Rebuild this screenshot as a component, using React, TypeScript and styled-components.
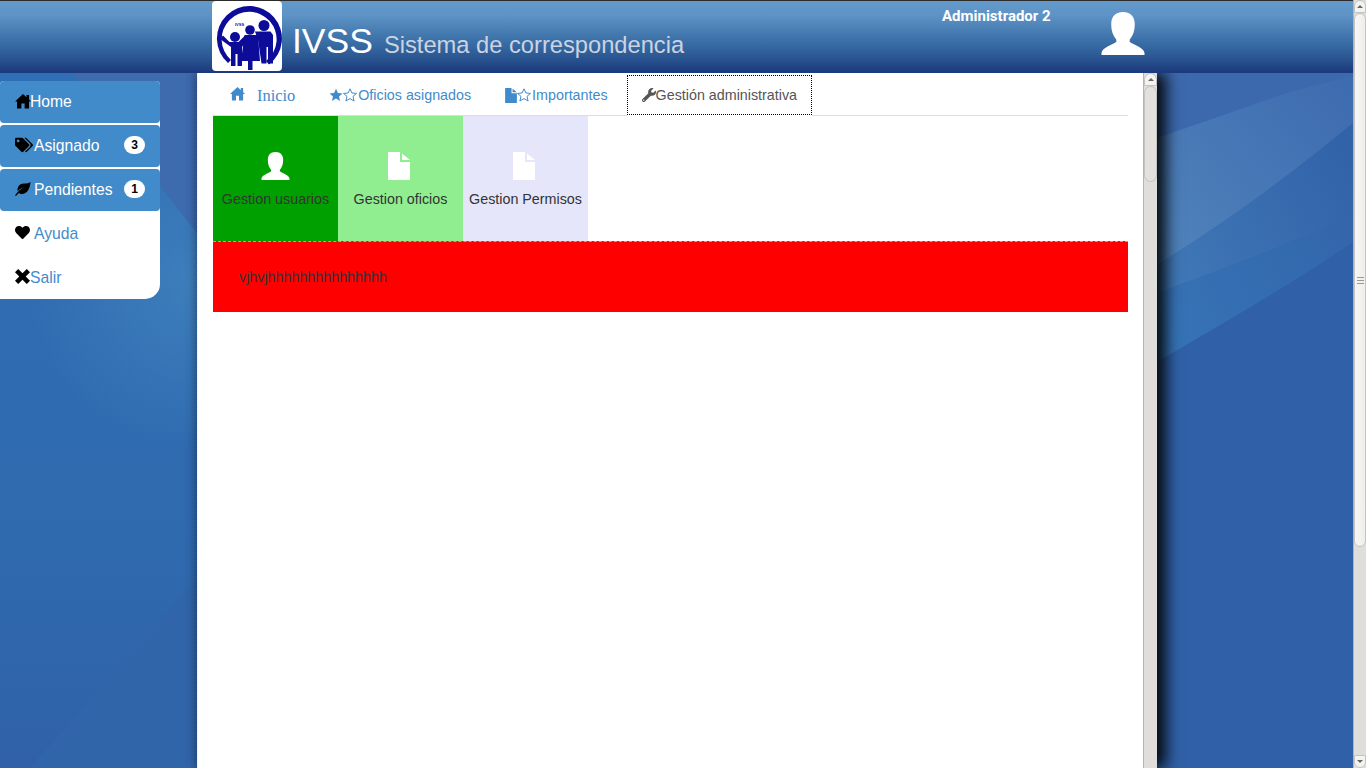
import { ReactNode } from "react";
import styled, { createGlobalStyle } from "styled-components";
import { FaTags, FaHeart, FaWrench } from "react-icons/fa";

const Global = createGlobalStyle`
    html, body { margin: 0; padding: 0; height: 100%; overflow: hidden; }
    body { font-family: "Liberation Sans", Arial, sans-serif; font-size: 14.3px; color: #333; }
    * { box-sizing: border-box; }
`;

const Page = styled.div`
    display: flex;
    width: 100%;
    height: 768px;
    overflow: hidden;
`;

const Viewport = styled.div`
    position: relative;
    flex: 1;
    display: flex;
    flex-direction: column;
    background: #3061a8;
    overflow: hidden;
`;

const Wallpaper = styled.svg`
    position: absolute;
    left: 0;
    top: 0;
    width: 1353px;
    height: 768px;
`;

const Header = styled.header`
    position: relative;
    z-index: 1;
    height: 73px;
    flex: none;
    display: flex;
    padding-left: 212px;
    background: linear-gradient(to bottom, #6499cb 0%, #5e93c6 20%, #3c71a9 55%, #2a5691 80%, #1c3a7c 100%);
    border-top: 1px solid #2b2b2b;
    border-bottom: 1px solid #1b3a80;
`;

const LogoBox = styled.div`
    width: 70px;
    height: 70px;
    background: #fff;
    border-radius: 4px;
`;

const Brand = styled.h1`
    margin: 19px 0 0 10px;
    width: 392px;
    font-weight: 400;
    font-size: 35.5px;
    line-height: 42px;
    color: #fff;
    white-space: nowrap;
`;

const BrandSub = styled.small`
    font-size: 23.7px;
    margin-left: 11px;
    color: #ccd3e0;
`;

const UserName = styled.div`
    margin: 6px 0 0 258px;
    width: 159px;
    font-family: Roboto, sans-serif;
    font-weight: 700;
    font-size: 15px;
    line-height: 18px;
    color: #fff;
`;

const Avatar = styled.svg`
    margin-top: 11px;
    width: 44px;
    height: 43px;
    fill: #fff;
`;

const Body = styled.div`
    position: relative;
    flex: 1;
    display: flex;
    align-items: flex-start;
    min-height: 0;
`;

const Sidebar = styled.ul`
    list-style: none;
    margin: 8px 0 0;
    padding: 0;
    width: 160px;
    background: #fff;
    border-radius: 4px 4px 15px 0;
`;

const NavItem = styled.li<{ $active?: boolean }>`
    display: flex;
    align-items: center;
    height: 42px;
    padding: 0 15px;
    border-radius: 4px;
    font-size: 15.7px;
    line-height: 40px;
    color: ${(props) => (props.$active ? "#fff" : "#428bca")};
    background: ${(props) => (props.$active ? "#428bca" : "transparent")};
    & + & { margin-top: 2px; }
`;

const NavIcon = styled.span<{ $width: number }>`
    display: inline-flex;
    align-items: center;
    width: ${(props) => props.$width}px;
    margin-top: -3px;
    color: #000;
    flex: none;
    svg { overflow: visible; }
`;

const Badge = styled.span`
    margin-left: auto;
    width: 21px;
    height: 18px;
    margin-top: -3px;
    border-radius: 10px;
    background: #fff;
    color: #000;
    font-weight: 700;
    font-size: 12px;
    line-height: 18px;
    text-align: center;
`;

const Main = styled.main`
    margin-left: 37px;
    width: 960px;
    height: 695px;
    display: flex;
    background: #fff;
    border-left: 1px dotted #dfe6f2;
    box-shadow: 9px 0 14px rgba(0, 0, 0, 0.9), -3px 0 8px rgba(0, 0, 0, 0.22);
`;

const Content = styled.div`
    flex: 1;
    padding: 2px 15px 0;
    min-width: 0;
`;

const Tabs = styled.ul`
    list-style: none;
    display: flex;
    height: 41px;
    margin: 0;
    padding: 0;
    border-bottom: 1px solid #ddd;
`;

const Tab = styled.li<{ $active?: boolean; $serif?: boolean }>`
    display: flex;
    align-items: center;
    height: 40px;
    padding: ${(props) => (props.$serif ? "2px" : "0")} ${(props) => (props.$active ? "14px" : "15px")} 0;
    margin-right: 4px;
    color: ${(props) => (props.$active ? "#555" : "#428bca")};
    background: #fff;
    border: ${(props) => (props.$active ? "1px dotted #000" : "0")};
    box-shadow: ${(props) => (props.$active ? "0 1px 0 #fff" : "none")};
    font-family: ${(props) => (props.$serif ? '"Liberation Serif", serif' : "inherit")};
    font-size: ${(props) => (props.$serif ? "16.4px" : "14.3px")};
    white-space: nowrap;
`;

const HomeGap = styled.span`
    display: inline-flex;
    width: 27px;
    margin-left: 2px;
    margin-top: -5px;
`;

const TabIcons = styled.span`
    display: inline-flex;
    align-items: center;
    margin-right: 1px;
`;

const Tiles = styled.div`
    display: flex;
`;

const Tile = styled.div<{ $color: string }>`
    width: 125px;
    height: 125px;
    background: ${(props) => props.$color};
    padding-top: 36px;
    display: flex;
    flex-direction: column;
    align-items: center;
    white-space: nowrap;
    line-height: 20px;
`;

const TileGlyph = styled.svg`
    width: 29px;
    height: 28px;
    margin-bottom: 9px;
    fill: #fff;
`;

const Notice = styled.div`
    height: 71px;
    padding: 25px 26px 0;
    background: #f00;
    border-top: 1px dashed #aaa;
    line-height: 20px;
`;

const Scroll = styled.div<{ $width: number; $height: number }>`
    flex: none;
    position: relative;
    width: ${(props) => props.$width}px;
    height: ${(props) => props.$height}px;
    display: flex;
    flex-direction: column;
    background: #dfdedb;
    border-left: 1px solid #b5b4b0;
`;

const ScrollArrow = styled.div<{ $down?: boolean }>`
    flex: none;
    height: 13px;
    display: flex;
    align-items: center;
    justify-content: center;
    background: #f4f3f1;
    border: 1px solid #c4c3bf;
    border-radius: ${(props) => (props.$down ? "0 0 7px 7px" : "7px 7px 0 0")};
    &::after {
        content: "";
        border-left: 3px solid transparent;
        border-right: 3px solid transparent;
        ${(props) => (props.$down ? "border-top: 3px solid #666;" : "border-bottom: 3px solid #666;")}
    }
`;

const ScrollThumb = styled.div<{ $height: number; $color: string }>`
    flex: none;
    height: ${(props) => props.$height}px;
    display: flex;
    flex-direction: column;
    align-items: center;
    justify-content: center;
    gap: 2px;
    background: ${(props) => props.$color};
    border: 1px solid #c4c3bf;
    border-radius: 7px;
`;

const Grip = styled.i`
    width: 7px;
    height: 1px;
    background: #9a9996;
`;

const ScrollSpace = styled.div`
    flex: 1;
`;

function UserGlyph() {
    return <path d="M21 0C29 0 32.5 5 32.5 12C32.5 18 31 23 27.5 27L27.5 29C31 32 42 35 42 40L42 42L0 42L0 40C0 35 11 32 14.5 29L14.5 27C11 23 9.5 18 9.5 12C9.5 5 13 0 21 0Z" />;
}

function FileGlyph() {
    return <path d="M3 0H15V10H25V28H3ZM17 1.5L25 8H17Z" />;
}

function HomeIcon({ size }: { size: number }) {
    return (
        <svg width={size} height={size} viewBox="0 0 16 16" fill="currentColor">
            <path d="M8 1L11.5 4.2V2H14V6.5L16 8.5H14V15.5H9.6V10.5H6.4V15.5H2V8.5H0Z" />
        </svg>
    );
}

function LeafIcon() {
    return (
        <svg width="16" height="16" viewBox="0 0 16 16" fill="currentColor">
            <path d="M15.5 1C15 8 12 13 7 13C5.5 13 4.5 12.5 3.8 12L1 15L0 14.3C3 10 6 8 10 5.5C6.5 7 4 8.5 2.8 10.5C1.5 6 5 2.5 9 2.5C11.5 2.5 14 2.3 15.5 1Z" />
        </svg>
    );
}

function RemoveIcon() {
    return (
        <svg width="15" height="15" viewBox="0 0 14 14" fill="currentColor">
            <path d="M0 3L3 0L7 4L11 0L14 3L10 7L14 11L11 14L7 10L3 14L0 11L4 7Z" />
        </svg>
    );
}

function StarIcon({ filled }: { filled?: boolean }) {
    return (
        <svg width="14" height="14" viewBox="0 0 14 14" fill={filled ? "currentColor" : "none"} stroke={filled ? "none" : "currentColor"}>
            <polygon points="7,0.8 8.9,5 13.5,5.4 10,8.4 11.1,13 7,10.6 2.9,13 4,8.4 0.5,5.4 5.1,5" />
        </svg>
    );
}

function Logo() {
    const ink = "#0c0c99";
    return (
        <svg width="70" height="70" viewBox="0 0 70 70">
            <g fill={ink}>
                <path d="M16 62A32.5 32.5 0 1 1 57 63.5L54 60A27.5 27.5 0 1 0 19 59Z" />
                <text x="23" y="25" fontFamily="Liberation Sans, sans-serif" fontSize="4" fontWeight="700">IVSS</text>
                <circle cx="23" cy="36" r="5" />
                <circle cx="38" cy="29" r="4.8" />
                <circle cx="52" cy="24.5" r="5.5" />
                <path d="M8 38L11 34.5L17.5 41H26.5L33 34.5L36 38L30 46V65H25.5V53H23.5V65H19V46Z" />
                <path d="M32.5 34H46L48 60H40.5V69H36V60H29Z" />
                <path d="M43 30.5H58.5L61 34V62.5H56V46H54.5V62.5H49.5L46 39Z" />
            </g>
        </svg>
    );
}

function TabFile() {
    return (
        <svg width="12" height="15" viewBox="3 0 22 28" fill="#428bca">
            <FileGlyph />
        </svg>
    );
}

interface IMenu {
    label: string;
    icon: ReactNode;
    iconWidth: number;
    active?: boolean;
    badge?: number;
}

const menu: IMenu[] = [
    { label: "Home", icon: <HomeIcon size={16} />, iconWidth: 15, active: true },
    { label: "Asignado", icon: <FaTags size={18} />, iconWidth: 19, active: true, badge: 3 },
    { label: "Pendientes", icon: <LeafIcon />, iconWidth: 19, active: true, badge: 1 },
    { label: "Ayuda", icon: <FaHeart size={15} />, iconWidth: 19 },
    { label: "Salir", icon: <RemoveIcon />, iconWidth: 15 },
];

const tiles = [
    { label: "Gestion usuarios", color: "#00a000", glyph: "user" },
    { label: "Gestion oficios", color: "#90ee90", glyph: "file" },
    { label: "Gestion Permisos", color: "#e6e6fa", glyph: "file" },
];

function App() {
    return (
        <Page>
            <Global />
            <Viewport>
                <Wallpaper viewBox="0 0 1353 768">
                    <defs>
                        <linearGradient id="wall" x1="0" y1="0" x2="0" y2="1">
                            <stop offset="0" stopColor="#2f6fb5" />
                            <stop offset="0.7" stopColor="#2f6aaf" />
                            <stop offset="1" stopColor="#3061a8" />
                        </linearGradient>
                        <radialGradient id="glow" gradientUnits="userSpaceOnUse" cx="197" cy="280" r="170">
                            <stop offset="0" stopColor="#4080bd" stopOpacity="0.9" />
                            <stop offset="1" stopColor="#4080bd" stopOpacity="0" />
                        </radialGradient>
                        <linearGradient id="band1" gradientUnits="userSpaceOnUse" x1="1157" y1="260" x2="1353" y2="100">
                            <stop offset="0" stopColor="#5083bb" />
                            <stop offset="1" stopColor="#3e6cb0" />
                        </linearGradient>
                        <linearGradient id="band2" gradientUnits="userSpaceOnUse" x1="1157" y1="280" x2="1353" y2="170">
                            <stop offset="0" stopColor="#4179b7" />
                            <stop offset="1" stopColor="#3163a9" />
                        </linearGradient>
                        <linearGradient id="band3" gradientUnits="userSpaceOnUse" x1="1157" y1="340" x2="1353" y2="230">
                            <stop offset="0" stopColor="#3674b6" />
                            <stop offset="1" stopColor="#3366ab" />
                        </linearGradient>
                    </defs>
                    <rect width="1353" height="768" fill="#3061a8" />
                    <rect width="197" height="768" fill="url(#wall)" />
                    <rect width="197" height="500" fill="url(#glow)" />
                    <path d="M72 73L197 233V73Z" fill="#3e6aae" />
                    <path d="M197 578L30 768H197Z" fill="#3165aa" />
                    <path d="M1157 73H1353V123C1290 175 1230 220 1157 265Z" fill="#3c69ae" />
                    <path d="M1157 138L1290 92L1353 76V123C1290 175 1230 220 1157 265Z" fill="url(#band1)" />
                    <path d="M1157 265C1230 220 1290 175 1353 123V217C1290 243 1230 267 1157 293Z" fill="url(#band2)" />
                    <path d="M1157 293C1230 267 1290 243 1353 217V242C1290 285 1220 325 1157 362Z" fill="url(#band3)" />
                </Wallpaper>
                <Header>
                    <LogoBox>
                        <Logo />
                    </LogoBox>
                    <Brand>
                        IVSS<BrandSub>Sistema de correspondencia</BrandSub>
                    </Brand>
                    <UserName>Administrador 2</UserName>
                    <Avatar viewBox="0 0 42 42">
                        <UserGlyph />
                    </Avatar>
                </Header>
                <Body>
                    <Sidebar>
                        {menu.map((item) => (
                            <NavItem key={item.label} $active={item.active}>
                                <NavIcon $width={item.iconWidth}>{item.icon}</NavIcon>
                                {item.label}
                                {item.badge ? <Badge>{item.badge}</Badge> : null}
                            </NavItem>
                        ))}
                    </Sidebar>
                    <Main>
                        <Content>
                            <Tabs>
                                <Tab $serif>
                                    <HomeGap><HomeIcon size={15} /></HomeGap>
                                    Inicio
                                </Tab>
                                <Tab>
                                    <TabIcons><StarIcon filled /><StarIcon /></TabIcons>
                                    Oficios asignados
                                </Tab>
                                <Tab>
                                    <TabIcons><TabFile /><StarIcon /></TabIcons>
                                    Importantes
                                </Tab>
                                <Tab $active>
                                    <FaWrench size={14} />
                                    Gestión administrativa
                                </Tab>
                            </Tabs>
                            <Tiles>
                                {tiles.map((tile) => (
                                    <Tile key={tile.label} $color={tile.color}>
                                        <TileGlyph viewBox={tile.glyph === "user" ? "0 0 42 42" : "1.5 0 28 28"}>
                                            {tile.glyph === "user" ? <UserGlyph /> : <FileGlyph />}
                                        </TileGlyph>
                                        {tile.label}
                                    </Tile>
                                ))}
                            </Tiles>
                            <Notice>vjhvjhhhhhhhhhhhhhhh</Notice>
                        </Content>
                        <Scroll $width={14} $height={695}>
                            <ScrollArrow />
                            <ScrollThumb $height={96} $color="#e2e1de" />
                            <ScrollSpace />
                        </Scroll>
                    </Main>
                </Body>
            </Viewport>
            <Scroll $width={13} $height={768}>
                <ScrollArrow />
                <ScrollThumb $height={534} $color="linear-gradient(to right, #f8f7f5, #efeeeb)">
                    <Grip />
                    <Grip />
                    <Grip />
                </ScrollThumb>
                <ScrollSpace />
                <ScrollArrow $down />
            </Scroll>
        </Page>
    );
}

export default App;
